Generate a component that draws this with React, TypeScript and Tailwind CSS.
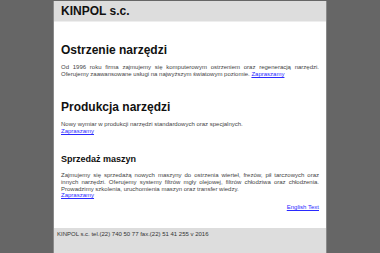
import React from "react";

export default function App() {
  const font = { fontFamily: '"Liberation Sans", Arial, sans-serif' };
  return (
    <div className="min-h-[253px] bg-[#666666] flex justify-center pt-[1px]" style={font}>
      <div className="w-[274px] border-x border-[#8a8a8a] bg-white flex flex-col">
        <div className="bg-[#dddddd] border-b border-[#eeeeee] h-[21px] px-[7px] pt-[3px]">
          <div className="text-[12px] leading-[14px] font-bold text-[#111]">KINPOL s.c.</div>
        </div>
        <div className="px-[7px] text-[#444]">
          <h1 className="mt-[21px] text-[12px] leading-[14px] font-bold text-[#111]">Ostrzenie narzędzi</h1>
          <p className="mt-[7px] text-[6px] leading-[7px] text-justify">
            Od 1996 roku firma zajmujemy się komputerowym ostrzeniem oraz regeneracją narzędzi. Oferujemy zaawansowane usługi na najwyższym światowym poziomie.{" "}
            <a href="#" className="text-[#2a2aff] underline">Zapraszamy</a>
          </p>
          <h1 className="mt-[22px] text-[12px] leading-[14px] font-bold text-[#111]">Produkcja narzędzi</h1>
          <p className="mt-[7px] text-[6px] leading-[7px] text-justify">
            Nowy wymiar w produkcji narzędzi standardowych oraz specjalnych.
            <br />
            <a href="#" className="text-[#2a2aff] underline">Zapraszamy</a>
          </p>
          <h2 className="mt-[19px] text-[9px] leading-[10px] font-bold text-[#111]">Sprzedaż maszyn</h2>
          <p className="mt-[8px] text-[6px] leading-[6.8px] text-justify">
            Zajmujemy się sprzedażą nowych maszyny do ostrzenia wierteł, frezów, pił tarczowych oraz innych narzędzi. Oferujemy systemy filtrów mgły olejowej, filtrów chłodziwa oraz chłodzenia. Prowadzimy szkolenia, uruchomienia maszyn oraz transfer wiedzy.
            <br />
            <a href="#" className="text-[#2a2aff] underline">Zapraszamy</a>
          </p>
          <div className="mt-[5px] text-right text-[6px] leading-[7px]">
            <a href="#" className="text-[#2a2aff] underline">English Text</a>
          </div>
        </div>
        <div className="mt-[17px] bg-[#dddddd] flex-1 min-h-[26px] px-[3px] pt-[3px] text-[6px] leading-[7px] text-[#333]">
          KINPOL s.c. tel.(22) 740 50 77 fax.(22) 51 41 255 v 2016
        </div>
      </div>
    </div>
  );
}
